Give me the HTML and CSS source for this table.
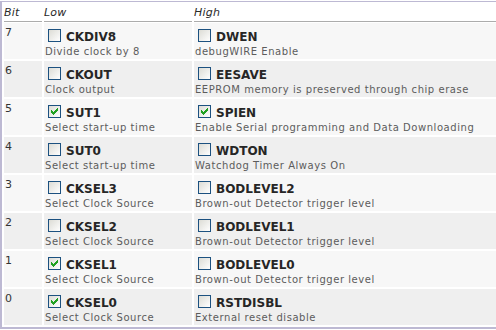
FILE: index.html
```html
<!DOCTYPE html>
<html>
<head>
<meta charset="utf-8">
<link rel="stylesheet" href="styles.css">
</head>
<body>
<div class="fuses">
  <div class="row head">
    <div class="hd">Bit</div><div class="hd">Low</div><div class="hd">High</div>
  </div>
  <div class="row">
    <div class="bit">7</div>
    <div class="fuse"><div class="name"><span class="cb"></span>CKDIV8</div><div class="desc">Divide clock by 8</div></div>
    <div class="fuse"><div class="name"><span class="cb"></span>DWEN</div><div class="desc">debugWIRE Enable</div></div>
  </div>
  <div class="row">
    <div class="bit">6</div>
    <div class="fuse"><div class="name"><span class="cb"></span>CKOUT</div><div class="desc">Clock output</div></div>
    <div class="fuse"><div class="name"><span class="cb"></span>EESAVE</div><div class="desc">EEPROM memory is preserved through chip erase</div></div>
  </div>
  <div class="row">
    <div class="bit">5</div>
    <div class="fuse"><div class="name"><span class="cb on"><svg width="11" height="11" viewBox="0 0 11 11"><path d="M8 2h1v1h-1z M7 3h2v1h-2z M2 4h1v1h-1z M6 4h3v1h-3z M2 5h2v1h-2z M5 5h3v1h-3z M2 6h5v1h-5z M3 7h3v1h-3z M4 8h1v1h-1z"/></svg></span>SUT1</div><div class="desc">Select start-up time</div></div>
    <div class="fuse"><div class="name"><span class="cb on"><svg width="11" height="11" viewBox="0 0 11 11"><path d="M8 2h1v1h-1z M7 3h2v1h-2z M2 4h1v1h-1z M6 4h3v1h-3z M2 5h2v1h-2z M5 5h3v1h-3z M2 6h5v1h-5z M3 7h3v1h-3z M4 8h1v1h-1z"/></svg></span>SPIEN</div><div class="desc">Enable Serial programming and Data Downloading</div></div>
  </div>
  <div class="row">
    <div class="bit">4</div>
    <div class="fuse"><div class="name"><span class="cb"></span>SUT0</div><div class="desc">Select start-up time</div></div>
    <div class="fuse"><div class="name"><span class="cb"></span>WDTON</div><div class="desc">Watchdog Timer Always On</div></div>
  </div>
  <div class="row">
    <div class="bit">3</div>
    <div class="fuse"><div class="name"><span class="cb"></span>CKSEL3</div><div class="desc">Select Clock Source</div></div>
    <div class="fuse"><div class="name"><span class="cb"></span>BODLEVEL2</div><div class="desc">Brown-out Detector trigger level</div></div>
  </div>
  <div class="row">
    <div class="bit">2</div>
    <div class="fuse"><div class="name"><span class="cb"></span>CKSEL2</div><div class="desc">Select Clock Source</div></div>
    <div class="fuse"><div class="name"><span class="cb"></span>BODLEVEL1</div><div class="desc">Brown-out Detector trigger level</div></div>
  </div>
  <div class="row">
    <div class="bit">1</div>
    <div class="fuse"><div class="name"><span class="cb on"><svg width="11" height="11" viewBox="0 0 11 11"><path d="M8 2h1v1h-1z M7 3h2v1h-2z M2 4h1v1h-1z M6 4h3v1h-3z M2 5h2v1h-2z M5 5h3v1h-3z M2 6h5v1h-5z M3 7h3v1h-3z M4 8h1v1h-1z"/></svg></span>CKSEL1</div><div class="desc">Select Clock Source</div></div>
    <div class="fuse"><div class="name"><span class="cb"></span>BODLEVEL0</div><div class="desc">Brown-out Detector trigger level</div></div>
  </div>
  <div class="row">
    <div class="bit">0</div>
    <div class="fuse"><div class="name"><span class="cb on"><svg width="11" height="11" viewBox="0 0 11 11"><path d="M8 2h1v1h-1z M7 3h2v1h-2z M2 4h1v1h-1z M6 4h3v1h-3z M2 5h2v1h-2z M5 5h3v1h-3z M2 6h5v1h-5z M3 7h3v1h-3z M4 8h1v1h-1z"/></svg></span>CKSEL0</div><div class="desc">Select Clock Source</div></div>
    <div class="fuse"><div class="name"><span class="cb"></span>RSTDISBL</div><div class="desc">External reset disable</div></div>
  </div>
</div>
</body>
</html>
```

FILE: styles.css
```css
html, body {
  margin: 0;
  padding: 0;
  background: #fff;
}
body {
  padding-top: 1px;
  font-family: "DejaVu Sans", Verdana, sans-serif;
  color: #333;
}
.fuses {
  display: flex;
  flex-direction: column;
  gap: 2px;
  border-top: 1px solid #bdb9d3;
  border-left: 2px solid #bdb9d3;
  border-bottom: 2px solid #bdb9d3;
  padding: 1px 0 2px 2px;
}
.row {
  display: grid;
  grid-template-columns: 38px 148px 1fr;
  column-gap: 2px;
  height: 36px;
}
.row:nth-child(even) > div { background: #f7f7f7; }
.row:nth-child(odd) > div { background: #efefef; }
.row.head {
  height: 19px;
  margin-bottom: -1px;
}
.row.head > .hd {
  background: #fff;
  border-bottom: 1px solid #acacac;
  box-sizing: border-box;
  font-size: 11px;
  line-height: 15px;
  font-style: italic;
  letter-spacing: 0.2px;
  padding-top: 2px;
  color: #2a2a2a;
}
.bit {
  font-size: 11px;
  line-height: 14px;
  padding: 3px 0 0 1px;
  color: #333;
}
.fuse {
  padding: 6px 0 0 1px;
  white-space: nowrap;
  overflow: hidden;
}
.name {
  font-size: 12px;
  font-weight: bold;
  line-height: 16px;
  color: #262626;
}
.desc {
  font-size: 10px;
  line-height: 14px;
  letter-spacing: 0.55px;
  color: #5c5c5c;
}
.cb {
  display: inline-block;
  width: 11px;
  height: 11px;
  border: 1px solid #1c5180;
  background: linear-gradient(135deg, #dcdcd5 0%, #f4f4f2 70%, #ffffff 100%);
  vertical-align: -1px;
  margin: 0 5px 0 3px;
}
.cb svg {
  display: block;
  fill: #21a121;
}
```
